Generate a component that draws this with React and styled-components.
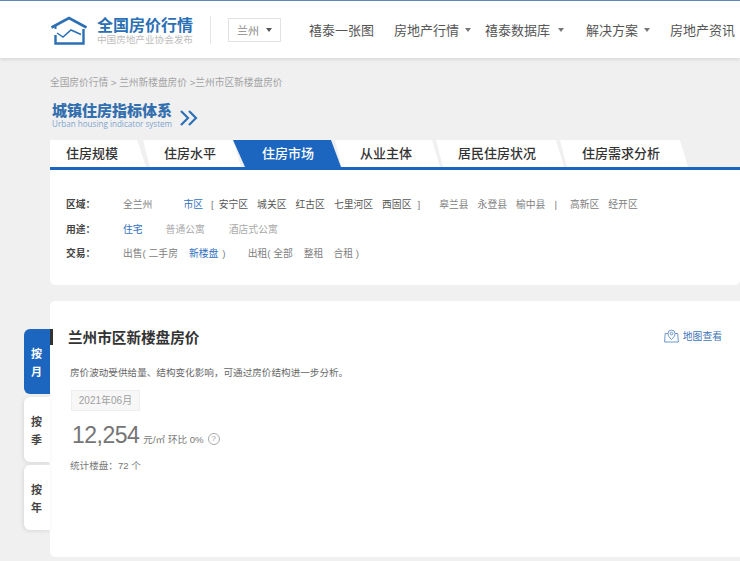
import React from "react";
import styled, { createGlobalStyle } from "styled-components";

const Global = createGlobalStyle`
  html, body { margin: 0; padding: 0; }
  body {
    background: #f0f0f1;
    font-family: "Liberation Sans", "Noto Sans CJK SC", sans-serif;
    overflow: hidden;
  }
`;

const Page = styled.div`
  width: 740px;
  height: 561px;
  overflow: hidden;
`;

/* header */
const Header = styled.header`
  height: 57px;
  border-top: 1px solid #5f86b8;
  background: #fff;
  box-shadow: 0 1px 4px rgba(0, 0, 0, 0.14);
  display: flex;
  align-items: center;
  padding-left: 50px;
  white-space: nowrap;
`;

const LogoText = styled.div`
  margin-left: 9px;
  width: 114px;
  flex: none;
  box-sizing: border-box;
  padding-top: 1px;
  border-right: 1px solid #e6e6e6;
  height: 28px;
`;

const LogoTitle = styled.div`
  font-size: 16px;
  line-height: 17px;
  font-weight: 700;
  color: #2b70b5;
`;

const LogoSub = styled.div`
  font-size: 9.6px;
  line-height: 12px;
  color: #bdbdbd;
`;

const CitySelect = styled.div`
  margin-left: 17px;
  width: 53px;
  height: 24px;
  box-sizing: border-box;
  border: 1px solid #e2e2e2;
  display: flex;
  align-items: center;
  padding-left: 8px;
  font-size: 11px;
  color: #888;
`;

const Caret = styled.span`
  display: inline-block;
  width: 0;
  height: 0;
  margin-left: ${(p) => p.$ml || 6}px;
  border-left: 3.5px solid transparent;
  border-right: 3.5px solid transparent;
  border-top: 4px solid ${(p) => p.$color || "#777"};
`;

const NavItem = styled.a`
  margin-left: ${(p) => p.$ml}px;
  font-size: 13px;
  color: #555;
  display: flex;
  align-items: center;
`;

/* content column */
const Crumbs = styled.div`
  margin: 18px 0 0 50px;
  font-size: 9.7px;
  line-height: 14px;
  color: #a2a2a2;
`;

const BrandRow = styled.div`
  margin: 10px 0 0 52px;
  height: 31px;
  display: flex;
  align-items: center;
`;

const BrandText = styled.div`
  width: 121px;
  flex: none;
`;

const BrandTitle = styled.div`
  font-size: 15px;
  line-height: 17px;
  font-weight: 900;
  color: #336fae;
  white-space: nowrap;
`;

const BrandSub = styled.div`
  font-size: 8.1px;
  line-height: 10px;
  color: #7fa5cc;
  font-family: "Open Sans", sans-serif;
  white-space: nowrap;
`;

const BrandArrow = styled.span`
  margin: 4px 0 0 7px;
  display: flex;
`;

const Tabs = styled.div`
  margin: 9px 0 0 50px;
  height: 27px;
  display: flex;
  border-bottom: 3px solid #1c66bf;
`;

const Tab = styled.div`
  width: ${(p) => p.$w + 10}px;
  margin-right: -10px;
  flex: none;
  box-sizing: border-box;
  padding-left: ${(p) => p.$pl}px;
  background: ${(p) => (p.$active ? "#1c66bf" : "#fff")};
  color: ${(p) => (p.$active ? "#fff" : "#333")};
  font-size: 13px;
  font-weight: 500;
  line-height: 27px;
  white-space: nowrap;
  clip-path: ${(p) =>
    p.$first
      ? "polygon(0 0, calc(100% - 12px) 0, calc(100% - 3px) 100%, 0 100%)"
      : p.$active
        ? "polygon(0 0, calc(100% - 10px) 0, 100% 100%, 12px 100%)"
        : "polygon(4px 0, calc(100% - 10px) 0, calc(100% - 2px) 100%, 11px 100%)"};
`;

const FilterCard = styled.section`
  margin-left: 50px;
  height: 115px;
  box-sizing: border-box;
  padding-top: 23px;
  background: #fff;
  border-radius: 0 0 5px 5px;
`;

const FilterRow = styled.div`
  display: flex;
  height: 24.5px;
  padding-left: 16px;
  font-size: 9.8px;
  line-height: 24.5px;
  white-space: nowrap;
`;

const FilterLabel = styled.span`
  width: 57px;
  flex: none;
  font-weight: 700;
  color: #444;
`;

const Opt = styled.span`
  margin-left: ${(p) => p.$ml || 0}px;
  color: ${(p) =>
    p.$on ? "#2f6fc0" : p.$tone === "dark" ? "#555" : p.$tone === "light" ? "#aaa" : "#808080"};
`;

/* market panel */
const PanelRow = styled.div`
  display: flex;
  margin: 16px 0 0 24px;
`;

const SideTabs = styled.div`
  width: 26px;
  flex: none;
  margin-top: 28px;
  display: flex;
  flex-direction: column;
  gap: 3px;
`;

const SideTab = styled.div`
  position: relative;
  height: 65px;
  box-sizing: border-box;
  padding: 16px 0 0 7px;
  border-radius: 6px 0 0 6px;
  background: ${(p) => (p.$active ? "#1c66bf" : "#fff")};
  color: ${(p) => (p.$active ? "#fff" : "#444")};
  box-shadow: ${(p) => (p.$active ? "none" : "-1px 1px 4px rgba(0, 0, 0, 0.1)")};
  font-size: 11px;
  font-weight: 700;
  line-height: 18px;
`;

const SideMark = styled.i`
  position: absolute;
  left: 26px;
  top: 0;
  width: 3px;
  height: 16px;
  background: #333;
  z-index: 1;
`;

const Panel = styled.section`
  flex: 1;
  height: 256px;
  box-sizing: border-box;
  padding: 25px 18px 0 18px;
  background: #fff;
  border-radius: 5px 0 0 5px;
  color: #777;
`;

const PanelHead = styled.div`
  display: flex;
  justify-content: space-between;
  align-items: center;
  height: 20px;
`;

const PanelTitle = styled.h2`
  margin: 0;
  font-size: 14.6px;
  font-weight: 700;
  color: #333;
  white-space: nowrap;
`;

const MapLink = styled.a`
  display: flex;
  align-items: center;
  gap: 4px;
  font-size: 9.8px;
  color: #3f76b8;
`;

const Desc = styled.p`
  margin: 20px 0 0 2px;
  font-size: 9.6px;
  line-height: 14px;
  color: #666;
  white-space: nowrap;
`;

const DateBadge = styled.div`
  margin: 10px 0 0 3px;
  width: 69px;
  height: 21px;
  box-sizing: border-box;
  border: 1px solid #eeeeee;
  background: #f7f7f7;
  color: #a0a0a0;
  font-size: 10px;
  line-height: 19px;
  text-align: center;
`;

const PriceRow = styled.div`
  display: flex;
  align-items: baseline;
  margin: 8px 0 0 4px;
  height: 32px;
`;

const Price = styled.span`
  font-size: 23px;
  letter-spacing: -0.5px;
  line-height: 32px;
  color: #757575;
`;

const PriceNote = styled.span`
  margin-left: 4px;
  font-size: 9.6px;
  color: #777;
`;

const HelpIcon = styled.span`
  margin-left: 4px;
  width: 10px;
  height: 10px;
  align-self: center;
  margin-top: 7px;
  border: 1px solid #aaa;
  border-radius: 50%;
  color: #999;
  font-size: 8px;
  line-height: 10px;
  text-align: center;
`;

const Stat = styled.div`
  margin: 8px 0 0 2px;
  font-size: 9.6px;
  line-height: 14px;
  color: #777;
`;

const HouseLogo = () => (
  <svg width="38" height="30" viewBox="0 0 38 30" fill="none" stroke="#2b70b5" strokeWidth="2.6">
    <path d="M1.5 12.5 19 3 36.5 12.5" />
    <path d="M5.5 20v8.5h28V14" strokeWidth="2.4" />
    <path d="M5.5 11v3" strokeWidth="2" />
    <path d="M7 18l6 4 8-7 10 4.5" strokeWidth="1.5" />
  </svg>
);

const DoubleChevron = () => (
  <svg width="18" height="16" viewBox="0 0 18 16" fill="none" stroke="#2f6fb5" strokeWidth="2.2">
    <path d="M1 1l7 7-7 7M9 1l7 7-7 7" />
  </svg>
);

const MapPin = () => (
  <svg width="15" height="14" viewBox="0 0 15 14" fill="none" stroke="#5d8cc6" strokeWidth="0.9">
    <path d="M4 4.5H1.2L.6 13h13.8l-.7-8.5H11" />
    <path d="M7.5 10.5C5.5 8.6 4 6.8 4 4.6a3.5 3.5 0 0 1 7 0c0 2.2-1.5 4-3.5 5.9z" fill="#fff" />
    <circle cx="7.5" cy="4.6" r="1.3" />
  </svg>
);

const tabs = [
  { label: "住房规模", w: 89, pl: 16, first: true },
  { label: "住房水平", w: 94, pl: 25 },
  { label: "住房市场", w: 98, pl: 29, active: true },
  { label: "从业主体", w: 101, pl: 29 },
  { label: "居民住房状况", w: 124, pl: 26 },
  { label: "住房需求分析", w: 124, pl: 26 },
];

export default function App() {
  return (
    <Page>
      <Global />
      <Header>
        <HouseLogo />
        <LogoText>
          <LogoTitle>全国房价行情</LogoTitle>
          <LogoSub>中国房地产业协会发布</LogoSub>
        </LogoText>
        <CitySelect>
          兰州
          <Caret $color="#555" $ml={7} />
        </CitySelect>
        <NavItem $ml={28}>禧泰一张图</NavItem>
        <NavItem $ml={20}>
          房地产行情
          <Caret />
        </NavItem>
        <NavItem $ml={14}>
          禧泰数据库
          <Caret $ml={8} />
        </NavItem>
        <NavItem $ml={22}>
          解决方案
          <Caret />
        </NavItem>
        <NavItem $ml={20}>房地产资讯</NavItem>
      </Header>

      <Crumbs>全国房价行情 &gt; 兰州新楼盘房价 &gt;兰州市区新楼盘房价</Crumbs>
      <BrandRow>
        <BrandText>
          <BrandTitle>城镇住房指标体系</BrandTitle>
          <BrandSub>Urban housing indicator system</BrandSub>
        </BrandText>
        <BrandArrow>
          <DoubleChevron />
        </BrandArrow>
      </BrandRow>

      <Tabs>
        {tabs.map((t) => (
          <Tab key={t.label} $w={t.w} $pl={t.pl} $active={t.active} $first={t.first}>
            {t.label}
          </Tab>
        ))}
      </Tabs>

      <FilterCard>
        <FilterRow>
          <FilterLabel>区域：</FilterLabel>
          <Opt>全兰州</Opt>
          <Opt $ml={31} $on>市区</Opt>
          <Opt $ml={8}>[</Opt>
          <Opt $ml={5} $tone="dark">安宁区</Opt>
          <Opt $ml={9} $tone="dark">城关区</Opt>
          <Opt $ml={9} $tone="dark">红古区</Opt>
          <Opt $ml={9} $tone="dark">七里河区</Opt>
          <Opt $ml={9} $tone="dark">西固区</Opt>
          <Opt $ml={6}>]</Opt>
          <Opt $ml={19}>皋兰县</Opt>
          <Opt $ml={9}>永登县</Opt>
          <Opt $ml={9}>榆中县</Opt>
          <Opt $ml={9}>|</Opt>
          <Opt $ml={13}>高新区</Opt>
          <Opt $ml={9}>经开区</Opt>
        </FilterRow>
        <FilterRow>
          <FilterLabel>用途：</FilterLabel>
          <Opt $on>住宅</Opt>
          <Opt $ml={23} $tone="light">普通公寓</Opt>
          <Opt $ml={24} $tone="light">酒店式公寓</Opt>
        </FilterRow>
        <FilterRow>
          <FilterLabel>交易：</FilterLabel>
          <Opt>出售( 二手房</Opt>
          <Opt $ml={11} $on>新楼盘</Opt>
          <Opt $ml={4}>)</Opt>
          <Opt $ml={22}>出租( 全部</Opt>
          <Opt $ml={11}>整租</Opt>
          <Opt $ml={10}>合租 )</Opt>
        </FilterRow>
      </FilterCard>

      <PanelRow>
        <SideTabs>
          <SideTab $active>
            <SideMark />按<br />月
          </SideTab>
          <SideTab>按<br />季</SideTab>
          <SideTab>按<br />年</SideTab>
        </SideTabs>
        <Panel>
          <PanelHead>
            <PanelTitle>兰州市区新楼盘房价</PanelTitle>
            <MapLink>
              <MapPin />
              地图查看
            </MapLink>
          </PanelHead>
          <Desc>房价波动受供给量、结构变化影响，可通过房价结构进一步分析。</Desc>
          <DateBadge>2021年06月</DateBadge>
          <PriceRow>
            <Price>12,254</Price>
            <PriceNote>元/㎡ 环比 0%</PriceNote>
            <HelpIcon>?</HelpIcon>
          </PriceRow>
          <Stat>统计楼盘：72 个</Stat>
        </Panel>
      </PanelRow>
    </Page>
  );
}
